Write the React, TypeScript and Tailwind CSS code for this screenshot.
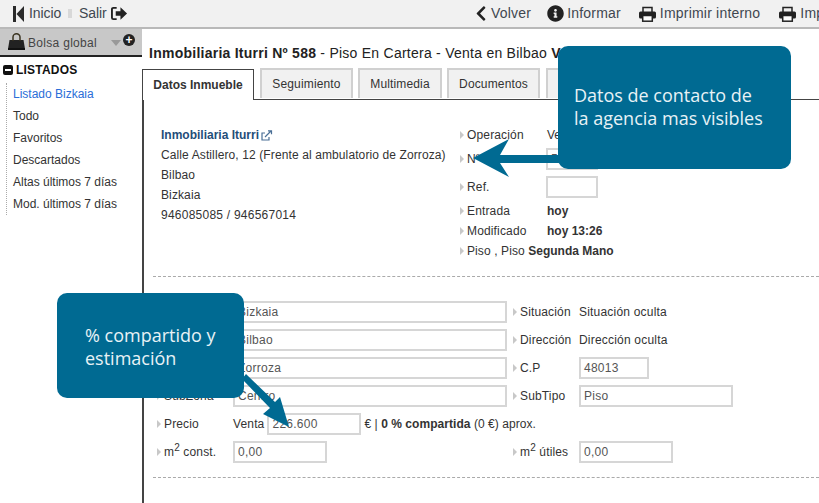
import React from 'react';
import { FaChevronLeft, FaInfoCircle } from 'react-icons/fa';

const sideLinks = ['Todo', 'Favoritos', 'Descartados', 'Altas últimos 7 días', 'Mod. últimos 7 días'];
const tabs = [
  { name: 'Seguimiento', cls: 'w-[93px] ml-[6px]' },
  { name: 'Multimedia', cls: 'w-[84px] ml-[5px]' },
  { name: 'Documentos', cls: 'w-[93px] ml-[5px]' },
  { name: 'Agenda', cls: 'w-[80px] ml-[6px]' },
];

const Sep = () => <span className="w-[4px] h-[9px] mx-[7px] bg-[#d8d8d8]" />;
const Arrow = () => <span className="inline-block mr-[3px] border-y-[4px] border-y-transparent border-l-[4px] border-l-[#c8c8c8]" />;

const PrinterIcon = () => (
  <svg className="w-[17px] h-[16px] mr-[4px] shrink-0" viewBox="0 0 17 16">
    <path d="M4 6V1.500h9V6" fill="none" stroke="#222" strokeWidth="1.500" />
    <rect x="0" y="5.500" width="17" height="7" rx="1.500" fill="#222" />
    <rect x="3.700" y="9.500" width="9.600" height="5.700" fill="#fff" stroke="#222" strokeWidth="1.500" />
  </svg>
);

const Input = ({ value, w }: { value: string; w: string }) => (
  <div className={`${w} h-[22px] leading-[18px] pl-[3px] border-2 border-[#d6d6d6] text-[#555] tracking-[0.25px] shrink-0`}>{value}</div>
);

const Label = ({ children, w }: { children: React.ReactNode; w: string }) => (
  <div className={`${w} flex items-center shrink-0 text-[#333] tracking-[0.15px]`}>
    <Arrow />
    <span>{children}</span>
  </div>
);

const Row = ({ left, right }: { left: React.ReactNode; right?: React.ReactNode }) => (
  <div className="flex items-center h-[22px] mb-[6px]">
    <div className="w-[356px] flex items-center shrink-0">{left}</div>
    {right}
  </div>
);

export default function App() {
  return (
    <div className="relative w-[819px] h-[503px] overflow-hidden bg-white text-[12px] text-[#222] font-['Liberation_Sans',Arial,sans-serif]">
      {/* top bar */}
      <header className="flex justify-between items-center h-[29px] bg-[#f1f1f1] border-b-2 border-[#b9b9b9] text-[14px] text-[#3f4750] tracking-[0.2px] whitespace-nowrap">
        <div className="flex items-center pl-[13px]">
          <svg className="w-[12px] h-[18px] mr-[4px]" viewBox="0 0 12 18">
            <path d="M0 1h3v16H0z" fill="#2a2a2a" />
            <path d="M11 1v16L3.500 9z" fill="#2a2a2a" />
          </svg>
          <span className="-tracking-[0.1px]">Inicio</span>
          <Sep />
          <span className="-tracking-[0.1px]">Salir</span>
          <svg className="w-[17px] h-[15px] ml-[4px]" viewBox="0 0 18 15">
            <path d="M6 1.500H2.500a1.500 1.500 0 0 0-1.500 1.500v9a1.500 1.500 0 0 0 1.500 1.500H6" fill="none" stroke="#222" strokeWidth="2" />
            <path d="M5 5h5V1l7 6.500-7 6.500v-4H5z" fill="#222" />
          </svg>
        </div>
        <div className="flex items-center w-[344px] shrink-0 overflow-hidden">
          <FaChevronLeft className="w-[12px] h-[17px] mr-[4px] text-[#222] shrink-0" />
          <span>Volver</span>
          <span className="w-[4px] h-[9px] ml-[7px] mr-[9px] bg-[#d8d8d8]" />
          <FaInfoCircle className="w-[17px] h-[17px] mr-[3px] text-[#222] shrink-0" />
          <span>Informar</span>
          <span className="w-[4px] h-[9px] mx-[9px] bg-[#d8d8d8]" />
          <PrinterIcon />
          <span>Imprimir interno</span>
          <span className="w-[4px] h-[9px] ml-[9px] mr-[10px] bg-[#d8d8d8]" />
          <PrinterIcon />
          <span>Imprimir</span>
        </div>
      </header>

      <div className="flex">
        {/* sidebar */}
        <aside className="w-[142px] shrink-0">
          <div className="flex items-center h-[28px] pl-[8px] pt-[2px] bg-[#c8c8c8] border-b-2 border-[#222]">
            <svg className="w-[17px] h-[17px] mr-[3px] -mt-[3px]" viewBox="0 0 17 17">
              <path d="M0 16l1.500-9h14l1.500 9z" fill="#222" />
              <path d="M0 15h17v2H0z" fill="#111" />
              <path d="M5 8V4a3.500 3.200 0 0 1 7 0v4" fill="none" stroke="#3a3320" strokeWidth="1.500" />
            </svg>
            <span className="text-[#444] tracking-[0.3px]">Bolsa global</span>
            <span className="ml-[14px] border-x-[5px] border-x-transparent border-t-[6px] border-t-[#999]" />
            <span className="ml-[2px] -mt-[6px] flex items-center justify-center w-[12px] h-[12px] rounded-full bg-[#222]">
              <span className="text-white font-bold text-[12px] leading-[12px]">+</span>
            </span>
          </div>
          <div className="flex items-center h-[26px] pl-[3px] font-bold text-[#111] tracking-[0.2px]">
            <span className="flex items-center justify-center w-[10px] h-[10px] mr-[3px] rounded-[2px] bg-[#111]">
              <span className="w-[6px] h-[2px] bg-white" />
            </span>
            LISTADOS
          </div>
          <ul className="ml-[6px] pl-[6px] border-l border-dotted border-[#aaa] text-[#333] leading-[22px]">
            <li className="text-[#2a6ed8]">Listado Bizkaia</li>
            {sideLinks.map((l) => (
              <li key={l}>{l}</li>
            ))}
          </ul>
        </aside>

        {/* main */}
        <main className="flex-1 min-w-0">
          <h1 className="h-[40px] pt-[14px] pl-[7px] text-[14px] leading-[20px] text-[#222] tracking-[0.25px] whitespace-nowrap">
            <b>Inmobiliaria Iturri Nº 588</b> - Piso En Cartera - Venta en Bilbao <b>Venta</b>
          </h1>
          <div className="border-l-2 border-[#444] h-[434px]">
            <div className="flex h-[31px] border-b border-[#444] -ml-[2px] text-[#333] tracking-[0.15px]">
              <div className="w-[112px] h-[31px] flex items-center justify-center border border-b-0 border-[#444] bg-white font-bold tracking-normal">Datos Inmueble</div>
              {tabs.map((t) => (
                <div key={t.name} className={`${t.cls} h-[30px] -mt-[1px] flex items-center justify-center border-2 border-[#d0d0d0] border-b-0 bg-[#f1f1f1]`}>{t.name}</div>
              ))}
            </div>

            <div className="flex h-[177px] ml-[9px] border-b border-dashed border-[#aaa]">
              <div className="w-[306px] pt-[25px] pl-[8px] leading-[20px] text-[#333] tracking-[0.11px] shrink-0">
                <div className="flex items-center font-bold text-[#1f4e79] tracking-normal">
                  Inmobiliaria Iturri
                  <svg className="w-[12px] h-[11px] ml-[2px]" viewBox="0 0 12 11" fill="none" stroke="#4a6f96" strokeWidth="1.200">
                    <path d="M8 7v3H1V3h3" />
                    <path d="M4 7l6-6M7 0.800h3.500v3.500" />
                  </svg>
                </div>
                <div>Calle Astillero, 12 (Frente al ambulatorio de Zorroza)</div>
                <div>Bilbao</div>
                <div>Bizkaia</div>
                <div className="tracking-[0.24px]">946085085 / 946567014</div>
              </div>
              <div className="pt-[25px] pl-[1px] text-[#333]">
                <div className="flex items-center h-[20px] mb-[3px]">
                  <Label w="w-[87px]">Operación</Label>
                  <span>Venta</span>
                </div>
                <div className="flex items-center h-[22px] mb-[6px]">
                  <Label w="w-[86px]">Nº</Label>
                  <Input value="588" w="w-[52px]" />
                </div>
                <div className="flex items-center h-[22px] mb-[3px]">
                  <Label w="w-[86px]">Ref.</Label>
                  <Input value="" w="w-[52px]" />
                </div>
                <div className="flex items-center h-[20px]">
                  <Label w="w-[87px]">Entrada</Label>
                  <b>hoy</b>
                </div>
                <div className="flex items-center h-[20px]">
                  <Label w="w-[87px]">Modificado</Label>
                  <b>hoy 13:26</b>
                </div>
                <div className="flex items-center h-[20px] tracking-[0.1px]">
                  <Arrow />
                  <span>Piso , Piso&nbsp;<b className="tracking-normal">Segunda Mano</b></span>
                </div>
              </div>
            </div>

            <div className="ml-[9px] pt-[24px] pl-[4px] pb-[8px] border-b border-dashed border-[#aaa] text-[#333]">
              <Row
                left={<><Label w="w-[76px]">Provincia</Label><Input value="Bizkaia" w="w-[274px]" /></>}
                right={<><Label w="w-[66px]">Situación</Label><span className="tracking-[0.2px]">Situación oculta</span></>}
              />
              <Row
                left={<><Label w="w-[76px]">Población</Label><Input value="Bilbao" w="w-[274px]" /></>}
                right={<><Label w="w-[66px]">Dirección</Label><span className="tracking-[0.2px]">Dirección oculta</span></>}
              />
              <Row
                left={<><Label w="w-[76px]">Zona</Label><Input value="Zorroza" w="w-[274px]" /></>}
                right={<><Label w="w-[66px]">C.P</Label><Input value="48013" w="w-[70px]" /></>}
              />
              <Row
                left={<><Label w="w-[76px]">SubZona</Label><Input value="Centro" w="w-[274px]" /></>}
                right={<><Label w="w-[66px]">SubTipo</Label><Input value="Piso" w="w-[154px]" /></>}
              />
              <div className="flex items-center h-[22px] mb-[6px]">
                <Label w="w-[76px]">Precio</Label>
                <span className="mr-[3px] tracking-[0.15px]">Venta</span>
                <Input value="226.600" w="w-[94px]" />
                <span className="ml-[3px] tracking-[0.05px]">€ | <b>0 % compartida</b> (0 €) aprox.</span>
              </div>
              <Row
                left={<><Label w="w-[76px]"><>m<sup className="text-[10px]">2</sup> const.</></Label><Input value="0,00" w="w-[94px]" /></>}
                right={<><Label w="w-[66px]"><>m<sup className="text-[10px]">2</sup> útiles</></Label><Input value="0,00" w="w-[94px]" /></>}
              />
            </div>
          </div>
        </main>
      </div>

      {/* callouts */}
      <svg className="absolute left-0 top-0 w-[819px] h-[503px] pointer-events-none" viewBox="0 0 819 503">
        <path d="M473 158L509 139L500 155H560V163H500L509 177Z" fill="#006a92" />
        <path d="M242 379L246 374L275 402L280 397L289 427L263 414L270 408Z" fill="#006a92" />
      </svg>
      <div className="absolute left-[558px] top-[46px] w-[233px] h-[123px] rounded-[10px] bg-[#006a92] pl-[16px] pt-[38px] text-[18px] leading-[23px] text-[#e8f2f6] font-['Open_Sans',sans-serif]">
        Datos de contacto de<br />la agencia mas visibles
      </div>
      <div className="absolute left-[57px] top-[293px] w-[187px] h-[105px] rounded-[10px] bg-[#006a92] pl-[28px] pt-[31px] text-[18px] leading-[23px] text-[#e8f2f6] font-['Open_Sans',sans-serif]">
        % compartido y<br />estimación
      </div>
    </div>
  );
}
